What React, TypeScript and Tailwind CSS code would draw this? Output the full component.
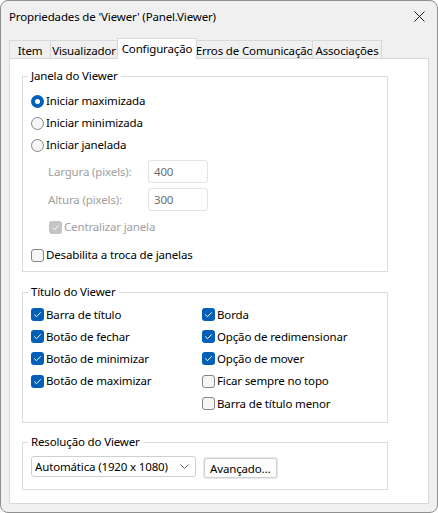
import React from "react";

const tabs = [
  { label: "Item", w: "w-[42px]" },
  { label: "Visualizador", w: "w-[68px]" },
  { label: "Configuração", w: "w-[80px]", active: true },
  { label: "Erros de Comunicação", w: "w-[117px]" },
  { label: "Associações", w: "w-[70px]" },
];

function CheckMark({ color = "#fff" }: { color?: string }) {
  return (
    <svg width="13" height="13" viewBox="0 0 13 13" className="block">
      <path d="M3.5 6.8 L5.5 8.7 L9.5 4.6" fill="none" stroke={color} strokeWidth="1" strokeLinecap="round" strokeLinejoin="round" />
    </svg>
  );
}

function Checkbox({ checked, disabled }: { checked?: boolean; disabled?: boolean }) {
  if (checked) {
    return (
      <span className={`w-[13px] h-[13px] shrink-0 rounded-[3px] ${disabled ? "bg-[#c4c4c4]" : "bg-[#005fb8]"}`}>
        <CheckMark />
      </span>
    );
  }
  return <span className="w-[13px] h-[13px] shrink-0 rounded-[3px] border border-[#858585] bg-[#f6f6f6]" />;
}

function Radio({ checked }: { checked?: boolean }) {
  if (checked) {
    return (
      <span className="w-[13px] h-[13px] shrink-0 rounded-full bg-[#005fb8] flex items-center justify-center">
        <span className="w-[5px] h-[5px] rounded-full bg-white" />
      </span>
    );
  }
  return <span className="w-[13px] h-[13px] shrink-0 rounded-full border border-[#858585] bg-[#f6f6f6]" />;
}

function Group({ title, className = "", inner = "", children }: { title: string; className?: string; inner?: string; children: React.ReactNode }) {
  return (
    <fieldset className={`border border-[#dcdcdc] w-[366px] ${className}`}>
      <legend className="ml-[5px] px-[3px] leading-[16px]">{title}</legend>
      <div className={`pl-[8px] ${inner}`}>{children}</div>
    </fieldset>
  );
}

function CheckRow({ label, checked }: { label: string; checked?: boolean }) {
  return (
    <div className="flex items-center gap-[2px] h-[22.3px]">
      <Checkbox checked={checked} />
      <span>{label}</span>
    </div>
  );
}

export default function App() {
  return (
    <div className="w-[438px] h-[513px] bg-[#f0f0f0] border border-[#8f8f8f] rounded-[8px] flex flex-col overflow-hidden font-['Segoe_UI','Noto_Sans',sans-serif] text-[11.5px] tracking-[-0.15px] text-black whitespace-nowrap">
      <div className="h-[31px] shrink-0 flex items-center justify-between pl-[8px] pr-[12px]">
        <span>Propriedades de 'Viewer' (Panel.Viewer)</span>
        <svg width="11" height="11" viewBox="0 0 11 11">
          <path d="M0.5 0.5 L10.5 10.5 M10.5 0.5 L0.5 10.5" stroke="#1b1b1b" strokeWidth="1" />
        </svg>
      </div>

      <div className="flex-1 flex flex-col px-[8px] pb-[8px]">
        <div className="h-[26px] shrink-0 flex items-end">
          {tabs.map((t, i) =>
            t.active ? (
              <div key={t.label} className={`${t.w} ${i > 0 ? "-ml-px" : ""} h-[21px] -mb-px relative z-10 bg-white border border-b-0 border-[#d9d9d9] flex justify-center pt-[1px]`}>
                {t.label}
              </div>
            ) : (
              <div key={t.label} className={`${t.w} ${i > 0 ? "-ml-px" : ""} h-[18px] bg-[#f0f0f0] border border-b-0 border-[#d9d9d9] flex justify-center pt-[1px]`}>
                {t.label}
              </div>
            )
          )}
        </div>

        <div className="flex-1 bg-white border border-[#d9d9d9] pt-[9px] pl-[12px] pr-[40px]">
          <Group title="Janela do Viewer" inner="pt-[6px] pb-[5px]">
            <div className="flex items-center gap-[2px] h-[22px]">
              <Radio checked />
              <span>Iniciar maximizada</span>
            </div>
            <div className="flex items-center gap-[2px] h-[22px]">
              <Radio />
              <span>Iniciar minimizada</span>
            </div>
            <div className="flex items-center gap-[2px] h-[22px]">
              <Radio />
              <span>Iniciar janelada</span>
            </div>
            <div className="pl-[17px] text-[#a0a0a0]">
              <div className="flex items-center mt-[4px]">
                <span className="w-[100px]">Largura (pixels):</span>
                <div className="w-[60px] h-[23px] border border-[#e3e3e3] rounded-[3px] px-[5px] flex items-center text-[#6d6d6d]">400</div>
              </div>
              <div className="flex items-center mt-[5px]">
                <span className="w-[100px]">Altura (pixels):</span>
                <div className="w-[60px] h-[23px] border border-[#e3e3e3] rounded-[3px] px-[5px] flex items-center text-[#6d6d6d]">300</div>
              </div>
            </div>
            <div className="flex items-center gap-[2px] h-[22px] mt-[5px] pl-[18px] text-[#a0a0a0]">
              <Checkbox checked disabled />
              <span>Centralizar janela</span>
            </div>
            <div className="flex items-center gap-[2px] h-[22px] mt-[6px]">
              <Checkbox />
              <span>Desabilita a troca de janelas</span>
            </div>
          </Group>

          <Group title="Título do Viewer" className="mt-[12px]" inner="pt-[3px] pb-[8px]">
            <div className="grid grid-cols-[171px_1fr]">
              <div>
                <CheckRow label="Barra de título" checked />
                <CheckRow label="Botão de fechar" checked />
                <CheckRow label="Botão de minimizar" checked />
                <CheckRow label="Botão de maximizar" checked />
              </div>
              <div>
                <CheckRow label="Borda" checked />
                <CheckRow label="Opção de redimensionar" checked />
                <CheckRow label="Opção de mover" checked />
                <CheckRow label="Ficar sempre no topo" />
                <CheckRow label="Barra de título menor" />
              </div>
            </div>
          </Group>

          <Group title="Resolução do Viewer" className="mt-[11px]" inner="pt-[6px] pb-[10px]">
            <div className="flex items-start gap-[7px]">
              <div className="w-[165px] h-[21px] border border-[#cfcfcf] rounded-[3px] bg-white flex items-center justify-between pl-[3px] pr-[6px]">
                <span>Automática (1920 x 1080)</span>
                <svg width="9" height="5" viewBox="0 0 9 5">
                  <path d="M0.5 0.5 L4.5 4.5 L8.5 0.5" fill="none" stroke="#606060" strokeWidth="1" />
                </svg>
              </div>
              <div className="mt-[1px] p-[1px] bg-[#e9e9e9] rounded-[3px]">
                <div className="w-[73px] h-[20px] border border-[#d0d0d0] rounded-[3px] bg-[#fdfdfd] flex items-center pl-[5px]">
                  Avançado...
                </div>
              </div>
            </div>
          </Group>
        </div>
      </div>
    </div>
  );
}
